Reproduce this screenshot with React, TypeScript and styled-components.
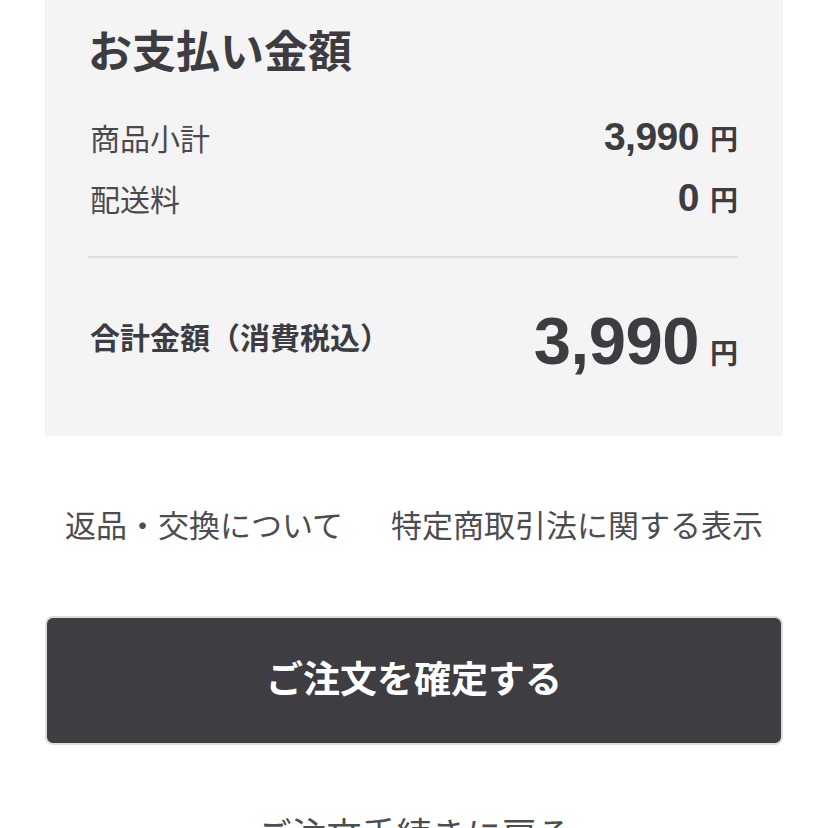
import React from 'react';
import styled, { createGlobalStyle } from 'styled-components';

const GlobalStyle = createGlobalStyle`
    html, body {
        margin: 0;
        padding: 0;
        background: #ffffff;
    }
    body {
        font-family: "Liberation Sans", "Noto Sans CJK JP", sans-serif;
        color: #3c3c41;
        overflow: hidden;
    }
`;

export default function App() {
    return (
        <>
            <GlobalStyle />
            <Page>
                <Summary>
                    <Heading>お支払い金額</Heading>
                    <Row>
                        <Label>商品小計</Label>
                        <Price amount={'3,990'} />
                    </Row>
                    <Row>
                        <Label>配送料</Label>
                        <Price amount={'0'} />
                    </Row>
                    <Divider />
                    <TotalRow>
                        <TotalLabel>合計金額（消費税込）</TotalLabel>
                        <Price amount={'3,990'} large />
                    </TotalRow>
                </Summary>

                <Links>
                    <LinkText>返品・交換について</LinkText>
                    <LinkText>特定商取引法に関する表示</LinkText>
                </Links>

                <ConfirmButton>ご注文を確定する</ConfirmButton>

                <BackLink>ご注文手続きに戻る</BackLink>
            </Page>
        </>
    );
}

interface PriceProps {
    amount: string;
    large?: boolean;
}
const Price: React.FC<PriceProps> = ({ amount, large }) => {
    return (
        <Value>
            <Amount size={large ? 67 : 39}>{amount}</Amount>
            <Yen>円</Yen>
        </Value>
    );
}

const Page = styled.div`
    display: flex;
    flex-direction: column;
    align-items: stretch;
    padding: 0 45px;
`;

const Summary = styled.section`
    display: flex;
    flex-direction: column;
    background-color: #f5f4f5;
    padding: 28px 45px 46px 43px;
`;

const Heading = styled.h2`
    margin: 0 0 28px 0;
    font-size: 44px;
    line-height: 50px;
    font-weight: 700;
    color: #3c3c41;
`;

const Row = styled.div`
    display: flex;
    justify-content: space-between;
    align-items: center;
    height: 61px;
`;

const Label = styled.span`
    font-size: 30px;
    color: #4a4a4e;
    padding-left: 2px;
`;

const Divider = styled.hr`
    margin: 28px 0 0 0;
    border: none;
    height: 2px;
    background-color: #dedddf;
`;

const TotalRow = styled.div`
    display: flex;
    justify-content: space-between;
    align-items: center;
    height: 100px;
    margin-top: 32px;
`;

const TotalLabel = styled.span`
    font-size: 30px;
    font-weight: 700;
    color: #3c3c41;
    padding-left: 2px;
    margin-top: -8px;
`;

const Value = styled.span`
    display: flex;
    align-items: baseline;
    gap: 11px;
`;

const Amount = styled.span<{ size: number }>`
    font-size: ${props => props.size}px;
    font-weight: 700;
    color: #3c3c41;
    letter-spacing: -0.5px;
`;

const Yen = styled.span`
    font-size: 28px;
    font-weight: 700;
    color: #3c3c41;
`;

const Links = styled.div`
    display: flex;
    justify-content: center;
    gap: 48px;
    margin: 72px -45px 0 -45px;
`;

const LinkText = styled.span`
    font-size: 31px;
    line-height: 38px;
    color: #4d4d50;
`;

const ConfirmButton = styled.button`
    display: flex;
    align-items: center;
    justify-content: center;
    margin-top: 70px;
    height: 129px;
    padding: 0 0 8px 0;
    background-color: #3d3d42;
    color: #ffffff;
    border: 2px solid #dcdcdc;
    border-radius: 8px;
    font-family: "Liberation Sans", "Noto Sans CJK JP", sans-serif;
    font-size: 37px;
    font-weight: 700;
    cursor: pointer;
`;

const BackLink = styled.div`
    margin-top: 71px;
    text-align: center;
    font-size: 35px;
    line-height: 40px;
    color: #4d4d50;
`;
